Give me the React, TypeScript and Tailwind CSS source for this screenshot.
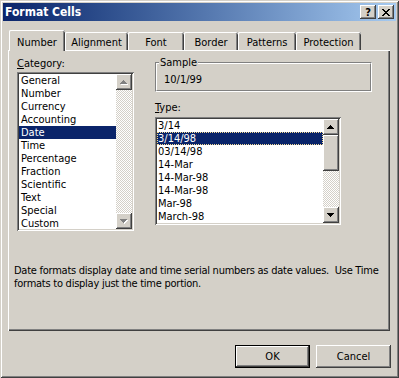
import React from 'react';

const RAISED =
  'shadow-[inset_-1px_-1px_0_#404040,inset_1px_1px_0_#ffffff,inset_-2px_-2px_0_#808080]';
const SUNKEN =
  'shadow-[inset_1px_1px_0_#808080,inset_-1px_-1px_0_#ffffff,inset_2px_2px_0_#404040,inset_-2px_-2px_0_#d4d0c8]';
const CHECKER =
  'bg-[image:repeating-conic-gradient(#ffffff_0%_25%,#d4d0c8_0%_50%)] bg-[size:2px_2px]';

const categories = [
  'General',
  'Number',
  'Currency',
  'Accounting',
  'Date',
  'Time',
  'Percentage',
  'Fraction',
  'Scientific',
  'Text',
  'Special',
  'Custom',
];

const types = ['3/14', '3/14/98', '03/14/98', '14-Mar', '14-Mar-98', '14-Mar-98', 'Mar-98', 'March-98'];

const tabs = [
  { label: 'Number', w: 'w-[56px]' },
  { label: 'Alignment', w: 'w-[63px]' },
  { label: 'Font', w: 'w-[56px]' },
  { label: 'Border', w: 'w-[54px]' },
  { label: 'Patterns', w: 'w-[58px]' },
  { label: 'Protection', w: 'w-[65px]' },
];

const Arrow = ({ up, disabled }: { up?: boolean; disabled?: boolean }) => {
  const rows = up ? [0, 1, 2, 3] : [3, 2, 1, 0];
  const fill = disabled ? '#808080' : '#000000';
  return (
    <svg width="16" height="16" viewBox="0 0 16 16" shapeRendering="crispEdges">
      {disabled &&
        rows.map((r, i) => (
          <rect key={'s' + i} x={8 - r} y={7 + i} width={r * 2 + 1} height={1} fill="#ffffff" />
        ))}
      {rows.map((r, i) => (
        <rect key={i} x={7 - r} y={6 + i} width={r * 2 + 1} height={1} fill={fill} />
      ))}
    </svg>
  );
};

const ScrollButton = ({ up, disabled }: { up?: boolean; disabled?: boolean }) => (
  <div className={`w-[16px] h-[16px] bg-[#d4d0c8] ${RAISED}`}>
    <Arrow up={up} disabled={disabled} />
  </div>
);

const TitleButton = ({ children }: { children: React.ReactNode }) => (
  <div className={`w-[16px] h-[14px] bg-[#d4d0c8] ${RAISED} flex items-center justify-center`}>
    {children}
  </div>
);

export default function App() {
  return (
    <div className="w-[399px] h-[378px] overflow-hidden bg-[#d4d0c8] p-[3px] shadow-[inset_1px_1px_0_#d4d0c8,inset_-1px_-1px_0_#404040,inset_2px_2px_0_#ffffff,inset_-2px_-2px_0_#808080] font-['DejaVu_Sans_Condensed','Liberation_Sans',sans-serif] text-[11px] leading-[13px] text-black select-none">
      {/* title bar */}
      <div className="h-[18px] flex items-center justify-between bg-linear-to-r from-[#0a246a] to-[#a6caf0] pl-[2px] pr-[2px]">
        <span className="text-white font-bold text-[12px]">Format Cells</span>
        <div className="flex gap-[2px]">
          <TitleButton>
            <span className="font-bold text-[11px] leading-[11px] pt-[1px]">?</span>
          </TitleButton>
          <TitleButton>
            <svg width="8" height="7" viewBox="0 0 8 7" shapeRendering="crispEdges">
              <path d="M0 0h2v1H0zM6 0h2v1H6zM1 1h2v1H1zM5 1h2v1H5zM2 2h4v1H2zM3 3h2v1H3zM2 4h4v1H2zM1 5h2v1H1zM5 5h2v1H5zM0 6h2v1H0zM6 6h2v1H6z" fill="#000" />
            </svg>
          </TitleButton>
        </div>
      </div>

      {/* tabs */}
      <div className="flex items-end h-[20px] mt-[9px] ml-[6px]">
        {tabs.map((t, i) => (
          <div
            key={t.label}
            className={`${t.w} flex justify-center bg-[#d4d0c8] rounded-t-[2px] shadow-[inset_1px_0_0_#ffffff,inset_0_1px_0_#ffffff,inset_-1px_0_0_#404040,inset_-2px_0_0_#808080] ${
              i === 0 ? 'h-[21px] -mb-[1px] pt-[6px] relative z-10' : 'h-[18px] pt-[4px]'
            }`}
          >
            {t.label}
          </div>
        ))}
      </div>

      {/* panel */}
      <div className="ml-[5px] w-[382px] h-[281px] pl-[6px] pt-[7px] shadow-[inset_1px_1px_0_#ffffff,inset_-1px_-1px_0_#404040,inset_-2px_-2px_0_#808080]">
        <div className="flex ml-[3px]">
          {/* category column */}
          <div className="w-[117px]">
            <div className="h-[13px]">
              <span className="underline">C</span>ategory:
            </div>
            <div className={`mt-[2px] h-[159px] bg-white p-[2px] flex ${SUNKEN}`}>
              <div className="flex-1 flex flex-col">
                {categories.map((c) => (
                  <div
                    key={c}
                    className={`h-[13px] pl-[2px] ${c === 'Date' ? 'bg-[#0a246a] text-white' : ''}`}
                  >
                    {c}
                  </div>
                ))}
              </div>
              <div className={`w-[16px] flex flex-col ${CHECKER}`}>
                <ScrollButton up disabled />
                <div className="flex-1" />
                <ScrollButton disabled />
              </div>
            </div>
          </div>

          {/* right column */}
          <div className="ml-[21px] flex flex-col">
            <div className="relative mt-[5px] w-[217px] h-[30px] border-t border-l border-[#808080] border-r-white border-b-white border-r border-b">
              <div className="h-full border-t border-l border-white border-r border-b border-r-[#808080] border-b-[#808080] pl-[7px] pt-[9px]">
                10/1/99
              </div>
              <span className="absolute -top-[7px] left-[3px] px-[1px] bg-[#d4d0c8]">Sample</span>
            </div>
            <div className="mt-[9px] h-[13px]">
              <span className="underline">T</span>ype:
            </div>
            <div className={`mt-[3px] w-[186px] h-[108px] bg-white p-[2px] flex ${SUNKEN}`}>
              <div className="flex-1 flex flex-col">
                {types.map((t, i) => (
                  <div
                    key={i}
                    className={`h-[13px] pl-[1px] ${
                      i === 1
                        ? 'bg-[#0a246a] text-white outline outline-1 outline-dotted outline-[#f5db95] -outline-offset-1'
                        : ''
                    }`}
                  >
                    {t}
                  </div>
                ))}
              </div>
              <div className="w-[16px] flex flex-col">
                <ScrollButton up />
                <div className={`h-[36px] bg-[#d4d0c8] ${RAISED}`} />
                <div className={`flex-1 ${CHECKER}`} />
                <ScrollButton />
              </div>
            </div>
          </div>
        </div>

        <p className="mt-[33px] whitespace-nowrap tracking-[-0.25px]">
          Date formats display date and time serial numbers as date values.&nbsp; Use Time
          <br />
          formats to display just the time portion.
        </p>
      </div>

      {/* buttons */}
      <div className="flex justify-end gap-[6px] mt-[14px] mr-[5px]">
        <div className="w-[75px] h-[23px] border border-black">
          <div className={`h-full flex items-center justify-center bg-[#d4d0c8] ${RAISED}`}>OK</div>
        </div>
        <div className={`w-[75px] h-[23px] flex items-center justify-center bg-[#d4d0c8] shadow-[inset_-1px_-1px_0_#404040,inset_1px_1px_0_#ffffff,inset_-2px_-2px_0_#808080,inset_2px_2px_0_#d4d0c8]`}>
          Cancel
        </div>
      </div>
    </div>
  );
}
